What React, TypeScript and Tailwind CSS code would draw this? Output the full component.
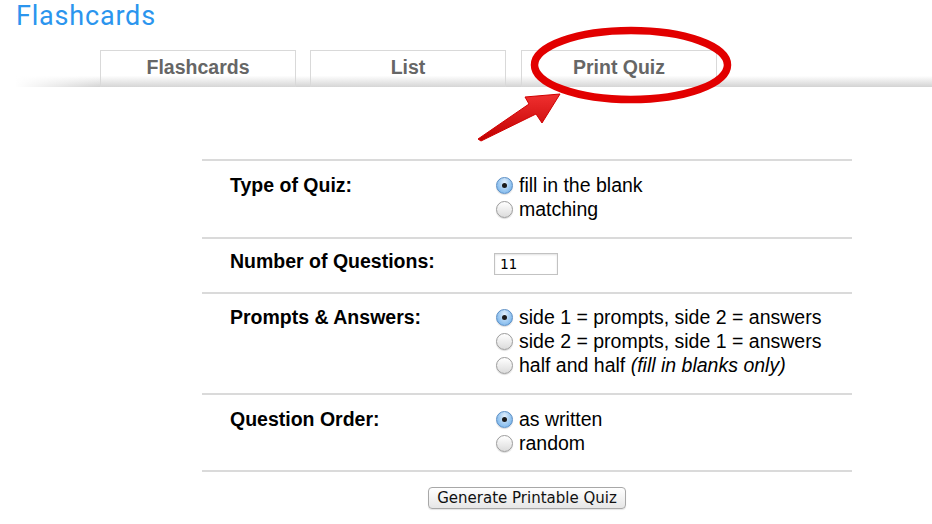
import React from 'react';

const tabs = ['Flashcards', 'List', 'Print Quiz'];

// Fake aqua-style radio, the native one renders differently in the headless browser
const Radio = ({ checked }: { checked?: boolean }) =>
  checked ? (
    <span className="flex h-[17px] w-[17px] shrink-0 items-center justify-center rounded-full border border-[#5b8ec4] bg-radial-[at_50%_30%] from-[#e3f0fc] to-[#62a8e8] shadow-[0_1px_1px_rgba(0,0,0,0.15)]">
      <span className="h-[5px] w-[5px] rounded-full bg-[#1b1b1b]" />
    </span>
  ) : (
    <span className="h-[17px] w-[17px] shrink-0 rounded-full border border-[#9c9c9c] bg-linear-to-b from-white to-[#dcdcdc] shadow-[0_1px_1px_rgba(0,0,0,0.15)]" />
  );

const Option = ({ checked, children }: { checked?: boolean; children: React.ReactNode }) => (
  <div className="flex h-[24px] items-center gap-[6px] pl-[2px]">
    <Radio checked={checked} />
    <span>{children}</span>
  </div>
);

const Row = ({ label, className, children }: { label: string; className: string; children: React.ReactNode }) => (
  <div className={`flex border-t-2 border-[#dadada] pl-[28px] ${className}`}>
    <div className="w-[264px] shrink-0 font-bold leading-[24px]">{label}</div>
    <div className="flex flex-col">{children}</div>
  </div>
);

export default function App() {
  return (
    <div className="relative h-[524px] w-[932px] overflow-hidden bg-white font-['Liberation_Sans',Arial,sans-serif] text-[19.5px] leading-[24px] text-black">
      <div className="h-[50px] pl-[16px] font-['Roboto',sans-serif] text-[27px] leading-[32px] tracking-[0.8px] text-[#2b95ee]">
        Flashcards
      </div>

      {/* tab strip with the grey shading underneath */}
      <div className="flex h-[37px] bg-linear-to-b from-white from-70% to-[#d3d3d3]">
        <div className="w-[100px] bg-linear-to-r from-white from-15% to-white/0" />
        {tabs.map((t, i) => (
          <div
            key={t}
            className={`flex h-[37px] w-[196px] justify-center border border-b-0 border-[#d9d9d9] bg-linear-to-b from-white from-68% to-[#d6d6d6] pt-[5px] font-bold leading-[22px] text-[#666] ${
              i === 1 ? 'ml-[14px]' : i === 2 ? 'ml-[15px]' : ''
            }`}
          >
            {t}
          </div>
        ))}
      </div>

      <div className="ml-[202px] mt-[72px] w-[650px]">
        <Row label="Type of Quiz:" className="pt-[12px] pb-[16px]">
          <Option checked>fill in the blank</Option>
          <Option>matching</Option>
        </Row>
        <Row label="Number of Questions:" className="pt-[10px] pb-[17px]">
          <input
            defaultValue="11"
            className="mt-[4px] h-[22px] w-[64px] border border-[#c2c2c2] px-[5px] font-['DejaVu_Sans_Mono',monospace] text-[14px] text-black shadow-[inset_0_1px_2px_rgba(0,0,0,0.12)] outline-none"
          />
        </Row>
        <Row label="Prompts & Answers:" className="pt-[11px] pb-[16px]">
          <Option checked>side 1 = prompts, side 2 = answers</Option>
          <Option>side 2 = prompts, side 1 = answers</Option>
          <Option>
            half and half <i>(fill in blanks only)</i>
          </Option>
        </Row>
        <Row label="Question Order:" className="pt-[12px] pb-[15px]">
          <Option checked>as written</Option>
          <Option>random</Option>
        </Row>
        <div className="flex justify-center border-t-2 border-[#dadada] pt-[15px]">
          <button className="h-[22px] w-[198px] rounded-[4px] border border-[#a8a8a8] bg-linear-to-b from-white to-[#e6e6e6] font-['DejaVu_Sans',sans-serif] text-[15px] leading-[20px] text-[#111] shadow-[0_1px_1px_rgba(0,0,0,0.1)]">
            Generate Printable Quiz
          </button>
        </div>
      </div>

      {/* red annotation drawn over the screenshot */}
      <svg className="pointer-events-none absolute left-0 top-0" width="932" height="524" viewBox="0 0 932 524">
        <defs>
          <linearGradient id="arrowFill" x1="0" y1="0" x2="0" y2="1">
            <stop offset="0" stopColor="#f03030" />
            <stop offset="1" stopColor="#c00000" />
          </linearGradient>
        </defs>
        <ellipse cx="631" cy="65" rx="96.5" ry="34.5" fill="none" stroke="#e20000" strokeWidth="7.5" />
        <path
          d="M478 139 L529 104 L525 97 L560 94 L542 123 L536 114 L481 141 Z"
          fill="url(#arrowFill)"
          stroke="#d00000"
          strokeWidth="1"
          strokeLinejoin="round"
        />
      </svg>
    </div>
  );
}
